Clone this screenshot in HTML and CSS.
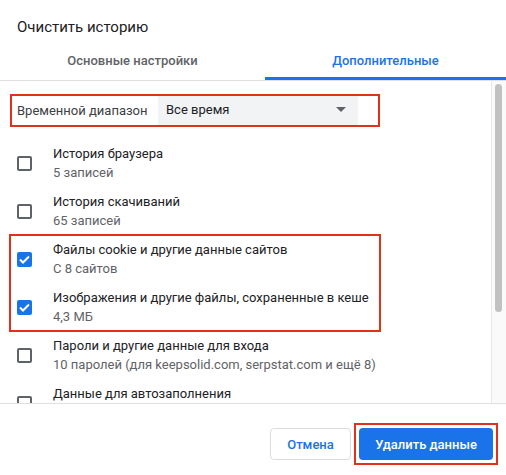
FILE: index.html
```html
<!DOCTYPE html>
<html lang="ru">
<head>
  <meta charset="UTF-8">
  <title>Очистить историю</title>
  <link rel="stylesheet" href="styles.css">
</head>
<body>
  <div class="dialog">
    <h1 class="title">Очистить историю</h1>

    <div class="tabs">
      <div class="tab tab-basic">Основные настройки</div>
      <div class="tab tab-active">Дополнительные</div>
    </div>

    <div class="body">
      <div class="list">
        <div class="range mark">
          <span class="range-label">Временной диапазон</span>
          <div class="select">
            <span>Все время</span>
            <svg class="arrow" width="10" height="5" viewBox="0 0 10 5"><path d="M0 0h10L5 5z" fill="#5f6368"/></svg>
          </div>
        </div>

        <div class="item">
          <span class="box"></span>
          <div class="text">
            <div class="name">История браузера</div>
            <div class="sub">5 записей</div>
          </div>
        </div>
        <div class="item">
          <span class="box"></span>
          <div class="text">
            <div class="name">История скачиваний</div>
            <div class="sub">65 записей</div>
          </div>
        </div>

        <div class="mark mark-items">
          <div class="item">
            <span class="box checked"><svg width="11" height="9" viewBox="0 0 11 9"><path d="M1 4.5l3 3L10 1.5" fill="none" stroke="#fff" stroke-width="2"/></svg></span>
            <div class="text">
              <div class="name">Файлы cookie и другие данные сайтов</div>
              <div class="sub">С 8 сайтов</div>
            </div>
          </div>
          <div class="item">
            <span class="box checked"><svg width="11" height="9" viewBox="0 0 11 9"><path d="M1 4.5l3 3L10 1.5" fill="none" stroke="#fff" stroke-width="2"/></svg></span>
            <div class="text">
              <div class="name">Изображения и другие файлы, сохраненные в кеше</div>
              <div class="sub">4,3 МБ</div>
            </div>
          </div>
        </div>

        <div class="item">
          <span class="box"></span>
          <div class="text">
            <div class="name">Пароли и другие данные для входа</div>
            <div class="sub">10 паролей (для keepsolid.com, serpstat.com и ещё 8)</div>
          </div>
        </div>
        <div class="item">
          <span class="box"></span>
          <div class="text">
            <div class="name">Данные для автозаполнения</div>
            <div class="sub">Адреса и ещё 3</div>
          </div>
        </div>
      </div>

      <div class="rail"><div class="thumb"></div></div>
    </div>

    <div class="footer">
      <button class="btn btn-cancel">Отмена</button>
      <span class="mark-btn"><button class="btn btn-primary">Удалить данные</button></span>
    </div>
  </div>
</body>
</html>
```

FILE: styles.css
```css
body {
  margin: 0;
  background: #fff;
  font-family: Roboto, "Liberation Sans", Arial, sans-serif;
  color: #202124;
}

.dialog {
  width: 506px;
  height: 475px;
  display: flex;
  flex-direction: column;
}

.title {
  margin: 0;
  padding: 17px 17px 0;
  height: 27px;
  font-size: 15px;
  font-weight: 400;
  line-height: 20px;
}

.tabs {
  display: flex;
  height: 36px;
  border-bottom: 1px solid #e0e0e0;
}

.tab {
  display: flex;
  justify-content: center;
  align-items: center;
  font-size: 13px;
  font-weight: 500;
  color: #5f6368;
  padding-bottom: 4px;
  box-sizing: border-box;
}

.tab-basic {
  width: 265px;
}

.tab-active {
  flex: 1;
  color: #1a73e8;
  border-bottom: 3px solid #1a73e8;
  padding-bottom: 1px;
}

.body {
  display: flex;
  height: 322px;
  overflow: hidden;
  border-bottom: 1px solid #e0e0e0;
}

.list {
  flex: 1;
  padding: 13px 0 0 10px;
}

.mark {
  outline: 2px solid #e0311d;
  outline-offset: -2px;
  width: 370px;
}

.range {
  display: flex;
  align-items: center;
  height: 33px;
  font-size: 13px;
  margin-bottom: 12px;
}

.range-label {
  width: 141px;
  padding-left: 7px;
  color: #3c4043;
}

.select {
  display: flex;
  align-items: center;
  justify-content: space-between;
  width: 200px;
  height: 31px;
  margin-top: -2px;
  padding: 0 8px;
  box-sizing: border-box;
  background: #f1f3f4;
  color: #202124;
}

.arrow {
  margin-right: 4px;
}

.item {
  display: flex;
  align-items: center;
  height: 48px;
}

.mark-items {
  outline-offset: -1px;
}

.box {
  width: 15px;
  height: 15px;
  margin: 0 21px 0 7px;
  box-sizing: border-box;
  border: 2px solid #5f6368;
  border-radius: 2px;
  display: flex;
  align-items: center;
  justify-content: center;
}

.box.checked {
  background: #1a73e8;
  border-color: #1a73e8;
}

.text {
  font-size: 13px;
}

.name {
  line-height: 20px;
  color: #202124;
}

.sub {
  line-height: 18px;
  color: #5f6368;
}

.rail {
  width: 11px;
  border-left: 1px solid #e8e8e8;
  background: #fafafa;
  padding: 3px 0 0 3px;
}

.thumb {
  width: 7px;
  height: 228px;
  border-radius: 4px;
  background: #c1c1c1;
}

.footer {
  height: 71px;
  box-sizing: border-box;
  display: flex;
  justify-content: flex-end;
  align-items: center;
  gap: 3px;
  padding: 19px 8px 10px 0;
}

.mark-btn {
  display: block;
  border: 2px solid #e0311d;
  padding: 3px;
  line-height: 0;
}

.btn {
  height: 32px;
  border-radius: 4px;
  font-family: Roboto, "Liberation Sans", Arial, sans-serif;
  font-size: 13px;
  font-weight: 500;
  cursor: pointer;
}

.btn-cancel {
  width: 81px;
  background: #fff;
  border: 1px solid #dadce0;
  color: #1a73e8;
}

.btn-primary {
  width: 134px;
  background: #1a73e8;
  border: none;
  color: #fff;
}
```
